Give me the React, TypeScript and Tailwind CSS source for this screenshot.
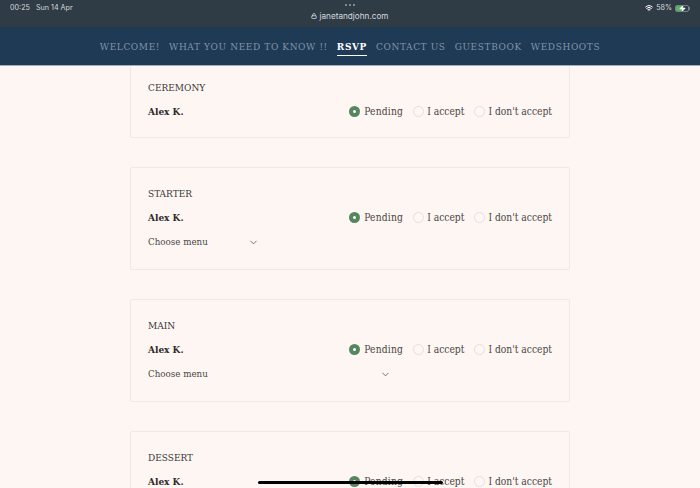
import { ChevronDown, Lock, Wifi, Zap } from "lucide-react";

const navItems = [
  { label: "WELCOME!" },
  { label: "WHAT YOU NEED TO KNOW !!" },
  { label: "RSVP", active: true },
  { label: "CONTACT US" },
  { label: "GUESTBOOK" },
  { label: "WEDSHOOTS" },
];

function Radio({ label, checked }: { label: string; checked?: boolean }) {
  return (
    <div className="flex items-center gap-[3px] text-[10.2px] leading-[14px]">
      {checked ? (
        <span className="mb-[1px] mr-[1px] flex h-[11px] w-[11px] items-center justify-center rounded-full bg-[#55875f]">
          <span className="h-[3px] w-[3px] rounded-full bg-white" />
        </span>
      ) : (
        <span className="mb-[1px] h-[11px] w-[11px] rounded-full border border-[#e3dfdc] bg-[#fdf8f5]" />
      )}
      <span className={checked ? "tracking-[0.2px]" : ""}>{label}</span>
    </div>
  );
}

function GuestRow() {
  return (
    <div className="flex h-[14px] items-center justify-between">
      <span className="font-bold leading-[14px] text-[#2e2a28]">Alex K.</span>
      <div className="flex items-center gap-[10px]">
        <Radio label="Pending" checked />
        <Radio label="I accept" />
        <Radio label="I don't accept" />
      </div>
    </div>
  );
}

function Card({
  title,
  selectWidth,
  clipped,
}: {
  title: string;
  selectWidth?: string;
  clipped?: boolean;
}) {
  return (
    <section
      className={`mx-auto mb-[29px] w-[440px] rounded-[2px] border border-[#efe9e5] px-[17px] ${
        clipped ? "border-t-0 pt-[15px] pb-[18px]" : "pt-[19px]"
      } ${selectWidth ? "pb-[20px]" : ""}`}
    >
      <h2 className="mb-[10px] h-[14px] leading-[14px] text-[#3b3735]">{title}</h2>
      <GuestRow />
      {selectWidth && (
        <div className={`mt-[10px] flex h-[14px] items-center justify-between text-[9.7px] ${selectWidth}`}>
          <span>Choose menu</span>
          <ChevronDown className="h-[11px] w-[11px] text-[#5a5654]" strokeWidth={1.75} />
        </div>
      )}
    </section>
  );
}

export default function App() {
  return (
    <div className="relative h-[488px] w-[700px] overflow-hidden bg-[#fdf6f3] font-['DejaVu_Serif',serif] text-[10px] text-[#4a4644] font-stretch-condensed">
      <div className="relative flex h-[27px] items-start justify-between bg-[#2f3b45] px-[10px] pt-[4px] font-['Inter',sans-serif] text-[7.2px] leading-[8px] text-[#d5dade]">
        <div className="flex gap-[6px]">
          <span>00:25</span>
          <span>Sun 14 Apr</span>
        </div>
        <div className="absolute left-0 top-[4px] flex w-full flex-col items-center">
          <div className="flex gap-[2px]">
            <span className="h-[2px] w-[2px] rounded-full bg-[#9aa3aa]" />
            <span className="h-[2px] w-[2px] rounded-full bg-[#9aa3aa]" />
            <span className="h-[2px] w-[2px] rounded-full bg-[#9aa3aa]" />
          </div>
          <div className="mt-[5px] flex items-center gap-[2px] text-[8.2px] leading-[10px]">
            <Lock className="h-[6px] w-[6px]" strokeWidth={3} />
            <span>janetandjohn.com</span>
          </div>
        </div>
        <div className="flex items-center gap-[3px]">
          <Wifi className="h-[8px] w-[8px] text-white" strokeWidth={3} />
          <span>58%</span>
          <div className="flex items-center">
            <div className="relative h-[7px] w-[14px] overflow-hidden rounded-[2px] border border-[#77818a]">
              <div className="h-full w-[58%] bg-[#58b368]" />
              <Zap className="absolute left-[3px] top-[-1px] h-[7px] w-[7px] fill-white text-white" />
            </div>
            <span className="h-[3px] w-[1px] bg-[#77818a]" />
          </div>
        </div>
      </div>

      <nav className="flex h-[39px] items-center justify-center gap-[9px] border-b border-[#9fb0bf] bg-[#1f3a55] pt-[5px] text-[9px] tracking-[0.6px] text-[#7f94aa] font-stretch-normal">
        {navItems.map((item) =>
          item.active ? (
            <span
              key={item.label}
              className="border-b border-white font-bold text-white"
            >
              {item.label}
            </span>
          ) : (
            <span key={item.label} className="pb-[1px]">
              {item.label}
            </span>
          ),
        )}
      </nav>

      <Card title="CEREMONY" clipped />
      <Card title="STARTER" selectWidth="w-[111px]" />
      <Card title="MAIN" selectWidth="w-[243px]" />
      <Card title="DESSERT" />

      <div className="absolute bottom-[4px] left-[258px] h-[3px] w-[185px] rounded-full bg-black" />
    </div>
  );
}
